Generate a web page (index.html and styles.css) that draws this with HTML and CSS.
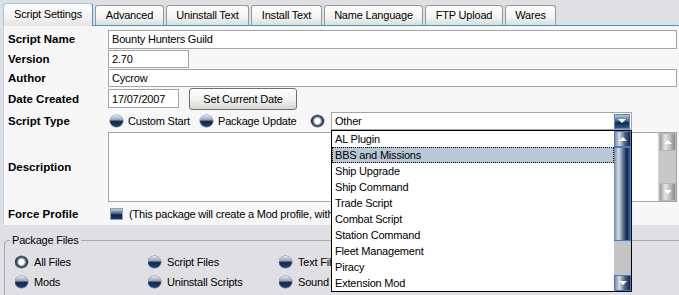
FILE: index.html
```html
<!DOCTYPE html>
<html lang="en">
<head>
  <meta charset="UTF-8">
  <title>Script Settings</title>
  <link rel="stylesheet" href="styles.css">
</head>
<body>
  <div class="tabs">
    <div class="tab active">Script Settings</div>
    <div class="tab">Advanced</div>
    <div class="tab">Uninstall Text</div>
    <div class="tab">Install Text</div>
    <div class="tab">Name Language</div>
    <div class="tab">FTP Upload</div>
    <div class="tab">Wares</div>
  </div>

  <div class="panel">
    <div class="row r-name">
      <label>Script Name</label>
      <input class="field full" type="text" value="Bounty Hunters Guild">
    </div>
    <div class="row r-version">
      <label>Version</label>
      <input class="field version" type="text" value="2.70">
    </div>
    <div class="row r-author">
      <label>Author</label>
      <input class="field full" type="text" value="Cycrow">
    </div>
    <div class="row r-date">
      <label>Date Created</label>
      <input class="field date" type="text" value="17/07/2007">
      <button class="btn">Set Current Date</button>
    </div>
    <div class="row r-type">
      <label>Script Type</label>
      <span class="radio"></span><span class="opt custom">Custom Start</span>
      <span class="radio"></span><span class="opt update">Package Update</span>
      <span class="radio on"></span>
      <div class="combo">
        <div class="combo-box">
          <span>Other</span>
          <span class="drop-btn"><i class="arrow down"></i></span>
        </div>
        <div class="list">
          <ul>
            <li>AL Plugin</li>
            <li class="sel">BBS and Missions</li>
            <li>Ship Upgrade</li>
            <li>Ship Command</li>
            <li>Trade Script</li>
            <li>Combat Script</li>
            <li>Station Command</li>
            <li>Fleet Management</li>
            <li>Piracy</li>
            <li>Extension Mod</li>
          </ul>
          <div class="vscroll blue">
            <span class="sbtn"><i class="arrow up"></i></span>
            <span class="thumb"></span>
            <span class="track"></span>
            <span class="sbtn"><i class="arrow down"></i></span>
          </div>
        </div>
      </div>
    </div>
    <div class="row r-desc">
      <label>Description</label>
      <div class="memo">
        <div class="memo-text"></div>
        <div class="vscroll grey">
          <span class="sbtn"><i class="arrow up"></i></span>
          <span class="track"></span>
          <span class="sbtn"><i class="arrow down"></i></span>
        </div>
      </div>
    </div>
    <div class="row r-force">
      <label>Force Profile</label>
      <span class="check"></span>
      <span class="opt note">(This package will create a Mod profile, with</span>
    </div>
  </div>

  <fieldset class="group">
    <legend>Package Files</legend>
    <div class="files">
      <div class="file"><span class="radio on"></span>All Files</div>
      <div class="file"><span class="radio"></span>Script Files</div>
      <div class="file"><span class="radio"></span>Text Files</div>
      <div class="file"><span class="radio"></span>Mods</div>
      <div class="file"><span class="radio"></span>Uninstall Scripts</div>
      <div class="file"><span class="radio"></span>Sound Files</div>
    </div>
  </fieldset>
</body>
</html>
```

FILE: styles.css
```css
:root {
  --bg: #e0dfe3;
  --panel: #f7f7f7;
  --field-border: #a5a5a5;
  --tab-border: #919b9c;
  --tab-line: #3d9ad6;
}
html, body {
  margin: 0;
  height: 100%;
  overflow: hidden;
}
body {
  font-family: "Liberation Sans", Arial, sans-serif;
  font-size: 11px;
  letter-spacing: -0.2px;
  color: #000;
  background: var(--bg);
}

/* tab strip */
.tabs {
  display: flex;
  align-items: flex-end;
  gap: 2px;
  height: 25px;
  padding-left: 3px;
}
.tab {
  box-sizing: border-box;
  height: 20px;
  line-height: 19px;
  text-align: center;
  border: 1px solid var(--tab-border);
  border-bottom: none;
  border-radius: 3px 3px 0 0;
  background: linear-gradient(#fefefe, #f4f4f3 60%, #dcdcd8);
}
.tab:nth-child(1) { width: 90px; }
.tab:nth-child(2) { width: 69px; }
.tab:nth-child(3) { width: 83px; }
.tab:nth-child(4) { width: 71px; }
.tab:nth-child(5) { width: 99px; }
.tab:nth-child(6) { width: 78px; }
.tab:nth-child(7) { width: 51px; }
.tab.active {
  height: 23px;
  line-height: 20px;
  border-color: #a9c6e0 #3d9ad6 transparent #a9c6e0;
  background: linear-gradient(#fdfdfd, #f3f3f2 60%, #e4e4e2);
  position: relative;
  top: 1px;
}

/* main settings page */
.panel {
  margin-left: 3px;
  height: 196px;
  padding: 3px 2px 0 4px;
  border-top: 1px solid var(--tab-line);
  border-left: 1px solid #b9d5ec;
  background: var(--panel);
}
.row {
  display: flex;
  align-items: center;
}
.row label {
  width: 100px;
  flex: none;
  font-weight: bold;
  font-size: 11.5px;
  letter-spacing: 0;
}
.r-name { height: 20px; }
.r-version { height: 19px; }
.r-author { height: 19px; }
.r-date { height: 23px; }
.r-type { height: 21px; }
.r-desc { height: 72px; }
.r-force { height: 22px; }

.field {
  box-sizing: border-box;
  height: 19px;
  padding: 0 3px;
  border: 1px solid var(--field-border);
  background: #fff;
  font: inherit;
  letter-spacing: inherit;
  outline: none;
}
.full { flex: 1; }
.r-version .field,
.r-author .field { height: 18px; }
.version { width: 81px; }
.date { width: 71px; }

.btn {
  box-sizing: border-box;
  margin-left: 10px;
  width: 108px;
  height: 22px;
  padding: 0;
  font: inherit;
  letter-spacing: inherit;
  border: 1px solid #707070;
  border-radius: 3px;
  background: linear-gradient(#ffffff, #f1f1ef 55%, #d6d5d0);
}

/* skinned radio / check */
.radio {
  flex: none;
  box-sizing: border-box;
  width: 13px;
  height: 12px;
  margin: 0 5px 0 2px;
  border-radius: 50%;
  background: linear-gradient(#e4e8ee, #9aa6b4 38%, #10284b 55%, #1d4476 100%);
  box-shadow: 0 0 0 0.5px #6d7a8a;
}
.radio.on {
  background: radial-gradient(circle, #fff 0 2.5px, #dfe4ea 3px, #53657d 4.5px, #0f2749 6px);
}
.opt { white-space: nowrap; }
.custom { width: 60px; margin-right: 10px; }
.update { width: 81px; margin-right: 10px; }
.note {
  width: 203px;
  overflow: hidden;
}

.check {
  flex: none;
  box-sizing: border-box;
  width: 13px;
  height: 12px;
  margin: 0 6px 0 2px;
  border: 1px solid #8da2bb;
  background: linear-gradient(#c6d0da, #5d7088 40%, #0b2244 60%, #163a6b);
}

/* combo with open list */
.combo {
  position: relative;
  margin: 2px 0 0 2px;
  width: 301px;
  align-self: flex-start;
}
.combo-box {
  box-sizing: border-box;
  height: 18px;
  display: flex;
  align-items: center;
  justify-content: space-between;
  padding: 0 1px 0 3px;
  border: 1px solid var(--field-border);
  background: #fff;
}
.drop-btn {
  width: 16px;
  height: 15px;
  display: flex;
  align-items: center;
  justify-content: center;
  border: 1px solid #5d83b5;
  box-sizing: border-box;
  background: linear-gradient(#b4c6dc, #4d6a8e 45%, #0f2748 60%, #2a5a94);
}
.list {
  position: absolute;
  left: 0;
  top: 18px;
  width: 301px;
  height: 162px;
  box-sizing: border-box;
  display: flex;
  border: 1px solid #000;
  background: #fff;
  z-index: 2;
}
.list ul {
  flex: 1;
  margin: 0;
  padding: 0;
  list-style: none;
}
.list li {
  height: 16px;
  line-height: 16px;
  padding-left: 3px;
  white-space: nowrap;
}
.list li.sel {
  background: #b9c7d6;
  outline: 1px dotted #000;
  outline-offset: -1px;
}

/* scrollbars */
.vscroll {
  width: 17px;
  flex: none;
  display: flex;
  flex-direction: column;
}
.sbtn {
  height: 16px;
  flex: none;
  display: flex;
  align-items: center;
  justify-content: center;
  box-sizing: border-box;
}
.vscroll.blue .sbtn {
  border: 1px solid #3f7fcf;
  background: linear-gradient(to right, #7d8d9e, #d3dbe3 30%, #50647c 65%, #13284a);
}
.vscroll.blue .thumb {
  height: 94px;
  box-sizing: border-box;
  border: 1px solid #3f7fcf;
  border-left-color: #6f8fb8;
  background: linear-gradient(to right, #8e9eae, #d5dde5 25%, #5d7088 55%, #0f2446 80%, #2c6ab8);
}
.vscroll.blue .track {
  flex: 1;
  background: #c4c4c4;
}
.vscroll.grey {
  border-left: 1px solid #d4d4d4;
}
.vscroll.grey .sbtn {
  height: 18px;
  border: 1px solid #b8b8b8;
  background: linear-gradient(to right, #9a9a9a, #e6e6e6 35%, #b9b9b9 70%, #8c8c8c);
}
.vscroll.grey .track {
  flex: 1;
  background: #c8c8c8;
}
.arrow {
  width: 0;
  height: 0;
  border-left: 4px solid transparent;
  border-right: 4px solid transparent;
}
.arrow.up { border-bottom: 4px solid #fff; }
.arrow.down { border-top: 4px solid #fff; }

/* description memo */
.memo {
  flex: 1;
  height: 70px;
  display: flex;
  box-sizing: border-box;
  border: 1px solid var(--field-border);
  background: #fff;
}
.memo-text { flex: 1; }

/* package files group */
.group {
  margin: 8px -20px 0 4px;
  padding: 0 0 0 5px;
  height: 80px;
  border: 1px solid #a9a9a9;
  border-radius: 4px;
}
.group legend {
  padding: 0 2px;
  line-height: 14px;
}
.files {
  display: grid;
  grid-template-columns: 133px 131px 53px;
  grid-auto-rows: 20px;
  margin: 5px 0 0 5px;
}
.file {
  display: flex;
  align-items: center;
  white-space: nowrap;
  overflow: hidden;
}
.file .radio { margin: 0 6px 0 0; }
```
